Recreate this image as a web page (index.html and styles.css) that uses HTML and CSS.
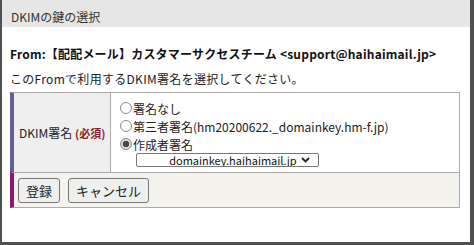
FILE: index.html
```html
<!DOCTYPE html>
<html lang="ja">
<head>
    <meta charset="UTF-8">
    <title>DKIMの鍵の選択</title>
    <link rel="stylesheet" href="styles.css">
</head>
<body>
    <div class="dialog">
        <div class="dialog-title">DKIMの鍵の選択</div>
        <div class="dialog-body">
            <p class="from">From:【配配メール】カスタマーサクセスチーム &lt;support@haihaimail.jp&gt;</p>
            <p class="lead">このFromで利用するDKIM署名を選択してください。</p>

            <table class="form-table">
                <tr class="row-field">
                    <th>DKIM署名 <span class="req">(必須)</span></th>
                    <td>
                        <label class="opt"><input type="radio" name="dkim" value="none">署名なし</label>
                        <label class="opt"><input type="radio" name="dkim" value="third">第三者署名(hm20200622._domainkey.hm-f.jp)</label>
                        <label class="opt"><input type="radio" name="dkim" value="author" checked>作成者署名</label>
                        <span class="select-wrap">
                            <select class="key-select">
                                <option>_domainkey.haihaimail.jp</option>
                            </select>
                            <svg class="chevron" width="9" height="6" viewBox="0 0 9 6"><polyline points="1,1 4.5,4.5 8,1" fill="none" stroke="#222" stroke-width="1.8"/></svg>
                        </span>
                    </td>
                </tr>
                <tr class="row-actions">
                    <td colspan="2">
                        <div class="actions">
                            <button type="button">登録</button>
                            <button type="button">キャンセル</button>
                        </div>
                    </td>
                </tr>
            </table>
        </div>
    </div>
</body>
</html>
```

FILE: styles.css
```css
body {
    margin: 0;
    font-family: "Noto Sans CJK JP", sans-serif;
    font-size: 12px;
    color: #222;
    background: #fff;
}
.dialog {
    box-sizing: border-box;
    height: 245px;
    border-left: 2px solid #505050;
    border-right: 4px solid #505050;
    border-bottom: 3px solid #505050;
}
.dialog-title {
    height: 21px;
    padding: 6px 0 0 9px;
    line-height: 21px;
    background: #e6e6e6;
    color: #333;
}
.dialog-body {
    padding: 18px 0 0 8px;
}
.from {
    margin: 0;
    line-height: 18px;
    font-weight: bold;
    color: #111;
    letter-spacing: 0.2px;
}
.lead {
    margin: 7px 0 0;
    line-height: 18px;
    letter-spacing: 0.3px;
}
.form-table {
    margin-top: 4px;
    width: 450px;
    border-collapse: separate;
    border-spacing: 0;
}
.form-table th {
    width: 91px;
    padding: 0 0 0 5px;
    text-align: left;
    font-weight: normal;
    background: #efefef;
    border-top: 1px solid #aaa;
    border-left: 4px solid #675e96;
    border-right: 1px solid #aaa;
}
.req {
    color: #8a1c2b;
    font-weight: bold;
    font-size: 11px;
}
.row-field td {
    height: 68px;
    padding: 6px 0 5px 9px;
    border-top: 1px solid #aaa;
    border-right: 1px solid #aaa;
    vertical-align: top;
}
.opt {
    display: flex;
    align-items: center;
    height: 18px;
}
.opt input {
    appearance: none;
    width: 12px;
    height: 12px;
    margin: 0 1px 0 0;
    border: 1px solid #8a8a8a;
    border-radius: 50%;
    background: #fff;
}
.opt input:checked {
    background: radial-gradient(circle, #4a4a4a 0 3px, #d9d9d9 3.5px);
}
.select-wrap {
    position: relative;
    display: block;
    width: fit-content;
    height: 14px;
    margin-left: 16px;
}
.key-select {
    display: block;
    appearance: none;
    box-sizing: border-box;
    width: 183px;
    height: 14px;
    padding: 0 0 0 26px;
    border: 1px solid #767676;
    border-radius: 2px;
    background: #fff;
    font-family: "Noto Sans CJK JP", sans-serif;
    font-size: 11px;
    line-height: 12px;
    color: #111;
}
.chevron {
    position: absolute;
    right: 9px;
    top: 4px;
}
.row-actions td {
    height: 34px;
    padding: 0 0 0 4px;
    background: #f3f2ec;
    border-top: 1px solid #aaa;
    border-left: 4px solid #8b1a6b;
    border-right: 1px solid #aaa;
    border-bottom: 1px solid #aaa;
}
.actions {
    display: flex;
    gap: 8px;
}
.actions button {
    height: 25px;
    padding: 0 7px;
    border: 1px solid #767676;
    border-radius: 3px;
    background: #efefef;
    font-family: "Noto Sans CJK JP", sans-serif;
    font-size: 13px;
    color: #222;
}
```
